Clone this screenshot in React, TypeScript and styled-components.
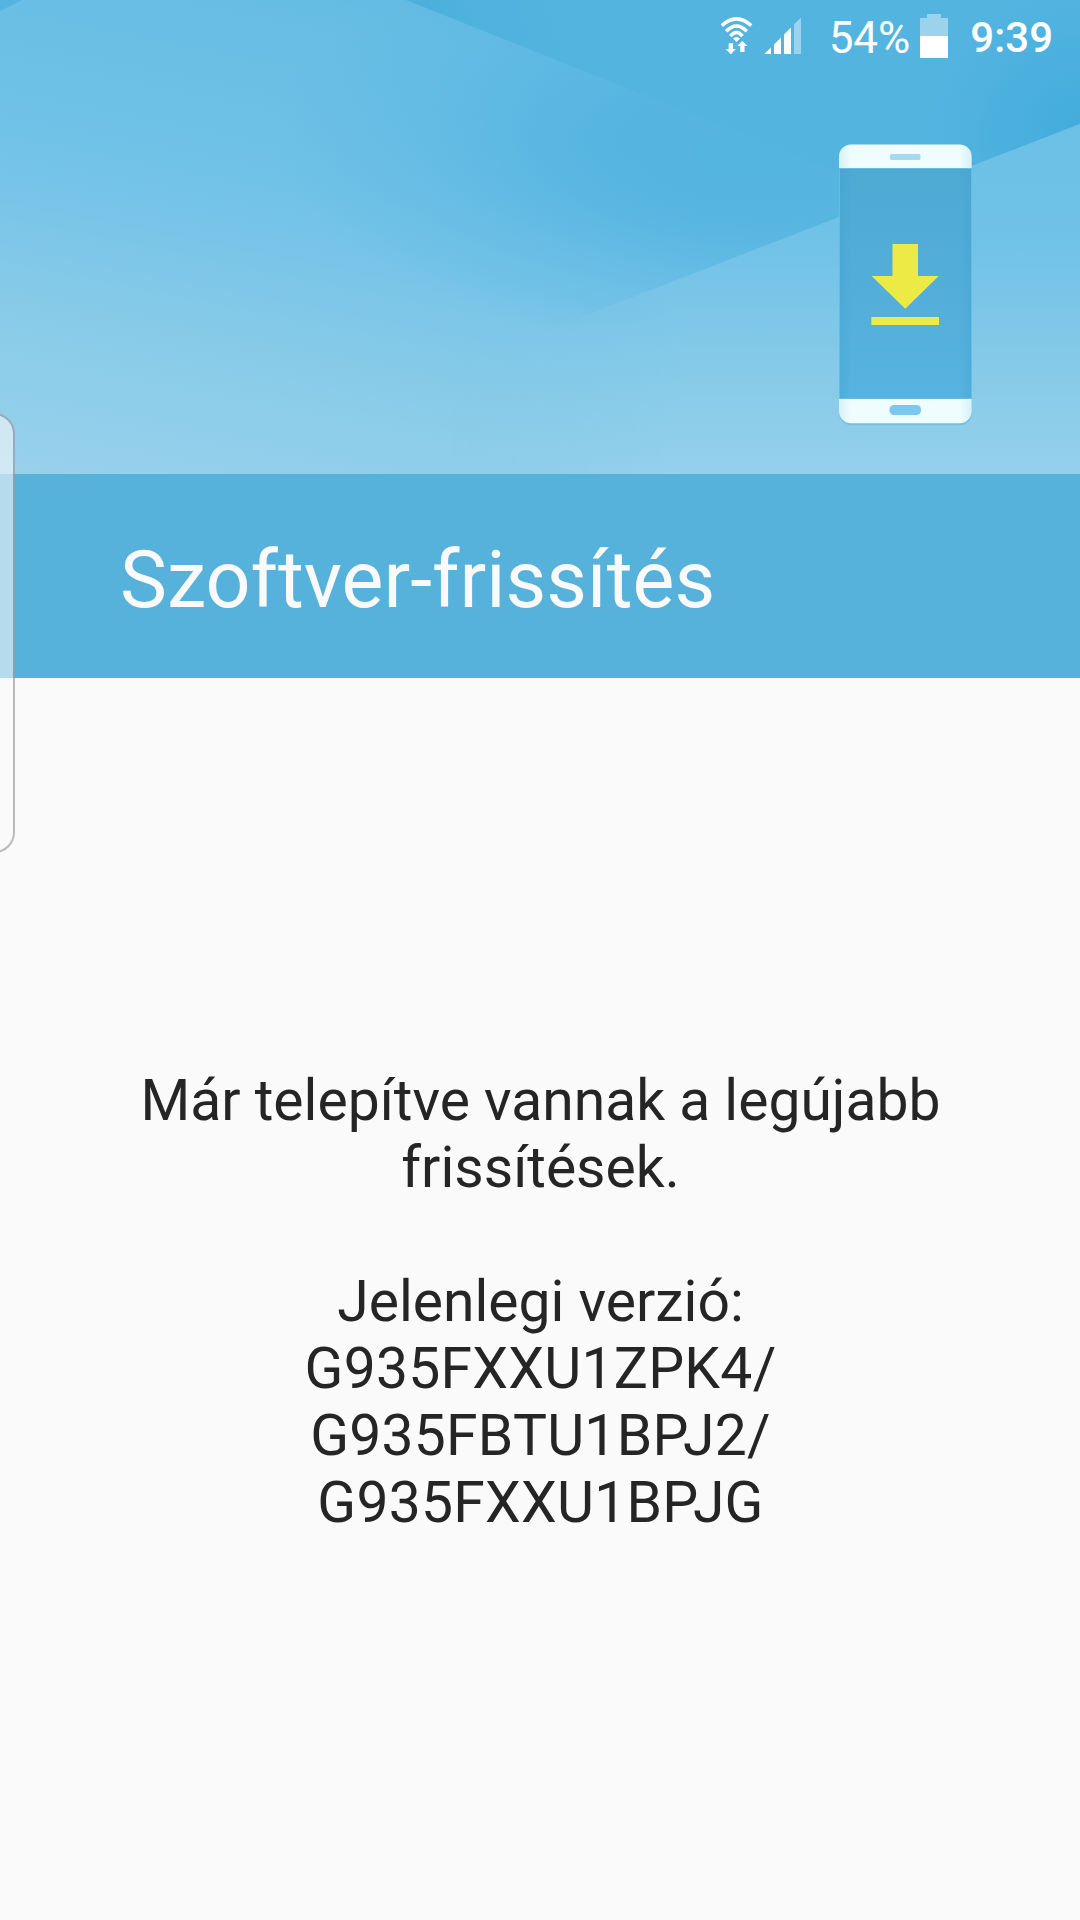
import React from "react";
import styled, { createGlobalStyle } from "styled-components";

const GlobalStyle = createGlobalStyle`
  * { box-sizing: border-box; }
  body { margin: 0; background: #fafafa; }
`;

const Screen = styled.div`
  position: relative;
  display: flex;
  flex-direction: column;
  width: 1080px;
  height: 1920px;
  overflow: hidden;
  background: #fafafa;
  font-family: Roboto, "Liberation Sans", sans-serif;
`;

const Hero = styled.header`
  position: relative;
  display: flex;
  flex-direction: column;
  height: 474px;
  flex: none;
`;

const Backdrop = styled.svg`
  position: absolute;
  inset: 0;
`;

const StatusBar = styled.div`
  position: relative;
  display: flex;
  justify-content: flex-end;
  height: 72px;
  padding-right: 27px;
  color: #fff;
`;

const StatusIcon = styled.svg<{ $gap: number }>`
  flex: none;
  margin-right: ${(p) => p.$gap}px;
`;

const StatusText = styled.span<{ $size: number; $weight: number; $gap: number }>`
  font-size: ${(p) => p.$size}px;
  font-weight: ${(p) => p.$weight};
  line-height: 50px;
  padding-top: 13px;
  margin-right: ${(p) => p.$gap}px;
  white-space: nowrap;
`;

const PhoneRow = styled.div`
  position: relative;
  display: flex;
  justify-content: flex-end;
  padding: 68px 104px 0 0;
`;

const TitleBar = styled.div`
  display: flex;
  align-items: center;
  height: 204px;
  flex: none;
  padding: 8px 0 0 120px;
  background: #57b2db;
`;

const Title = styled.h1`
  margin: 0;
  font-size: 79px;
  font-weight: 400;
  line-height: 94px;
  color: #fafafa;
  white-space: nowrap;
`;

const Content = styled.main`
  display: flex;
  flex-direction: column;
  align-items: center;
  gap: 67px;
  padding: 389px 0 0 1px;
`;

const Message = styled.p`
  margin: 0;
  font-size: 57px;
  line-height: 67px;
  text-align: center;
  color: #252525;
  white-space: pre-line;
`;

const VersionCode = styled.span`
  letter-spacing: 0.25px;
`;

const EdgeHandle = styled.div`
  position: absolute;
  left: -26px;
  top: 413px;
  width: 41px;
  height: 440px;
  border: 2px solid rgba(0, 0, 0, 0.26);
  border-radius: 21px;
  background: rgba(250, 250, 250, 0.58);
`;

function HeroBackdrop() {
  return (
    <Backdrop width="1080" height="474" viewBox="0 0 1080 474">
      <defs>
        <linearGradient id="base" gradientUnits="userSpaceOnUse" x1="280" y1="-50" x2="170" y2="500">
          <stop offset="0" stopColor="#5eb9e2" />
          <stop offset="0.09" stopColor="#66bde4" />
          <stop offset="0.37" stopColor="#6fc1e7" />
          <stop offset="0.51" stopColor="#77c4e8" />
          <stop offset="0.67" stopColor="#84c9e8" />
          <stop offset="0.79" stopColor="#8ccde9" />
          <stop offset="0.92" stopColor="#92cfeb" />
          <stop offset="1" stopColor="#97d1ec" />
        </linearGradient>
        <radialGradient
          id="depth"
          gradientUnits="userSpaceOnUse"
          cx="0"
          cy="0"
          r="1"
          gradientTransform="translate(750 155) rotate(4) scale(480 205)"
        >
          <stop offset="0" stopColor="#54b4e0" />
          <stop offset="0.35" stopColor="#54b4e0" stopOpacity="0.85" />
          <stop offset="0.5" stopColor="#54b4e0" stopOpacity="0.6" />
          <stop offset="0.7" stopColor="#54b4e0" stopOpacity="0.3" />
          <stop offset="1" stopColor="#54b4e0" stopOpacity="0" />
        </radialGradient>
        <linearGradient id="top" gradientUnits="userSpaceOnUse" x1="430" y1="20" x2="560" y2="-20">
          <stop offset="0" stopColor="#4db0dc" />
          <stop offset="1" stopColor="#54b4e0" />
        </linearGradient>
        <radialGradient id="corner" gradientUnits="userSpaceOnUse" cx="1080" cy="134" r="150">
          <stop offset="0" stopColor="#42acdc" />
          <stop offset="1" stopColor="#42acdc" stopOpacity="0" />
        </radialGradient>
        <linearGradient id="right" gradientUnits="userSpaceOnUse" x1="0" y1="124" x2="0" y2="474">
          <stop offset="0" stopColor="#6cc0e6" />
          <stop offset="0.28" stopColor="#6fc1e7" />
          <stop offset="0.43" stopColor="#76c4e8" />
          <stop offset="0.65" stopColor="#83c9e8" />
          <stop offset="1" stopColor="#94d0ec" />
        </linearGradient>
        <linearGradient id="rightFade" gradientUnits="userSpaceOnUse" x1="450" y1="0" x2="680" y2="0">
          <stop offset="0" stopColor="#fff" stopOpacity="0" />
          <stop offset="1" stopColor="#fff" />
        </linearGradient>
        <mask id="rightMask">
          <rect width="1080" height="474" fill="url(#rightFade)" />
        </mask>
      </defs>
      <rect width="1080" height="474" fill="url(#base)" />
      <rect width="1080" height="474" fill="url(#depth)" />
      <path d="M406 0L839 173L850 213L1080 124V0Z" fill="url(#top)" />
      <path d="M406 0L839 173L850 213L1080 124V0Z" fill="url(#corner)" />
      <path d="M1080 124L839 217L400 387V474H1080Z" fill="url(#right)" mask="url(#rightMask)" />
      <path d="M0 0H22L0 11Z" fill="#54b3e1" />
    </Backdrop>
  );
}

function WifiIcon() {
  return (
    <StatusIcon $gap={10} width="34" height="72" viewBox="720 0 34 72">
      <g fill="none" stroke="#fff" strokeWidth="3.5">
        <path d="M721.8 25.6Q736.5 12.2 751.2 25.6" />
        <path d="M726.2 31.2Q736.5 20.6 746.8 31.2" />
        <path d="M730.4 36.2Q736.5 28.6 742.6 36.2" />
      </g>
      <path d="M733 38.6Q736.5 35.6 740 38.6L736.5 42Z" fill="#fff" />
      <path d="M728.7 43.3H733V49H735.9L730.9 54.2L725.7 49H728.7Z" fill="#fff" />
      <path d="M742.4 41L747.4 46H744.5V52H740.2V46H737.2Z" fill="#fff" />
    </StatusIcon>
  );
}

function SignalIcon() {
  return (
    <StatusIcon $gap={27} width="38" height="72" viewBox="764 0 38 72">
      <path d="M764.3 54L771 47.4V54ZM774 54V44.4L781 37.4V54ZM784 54V34.6L791 27.6V54Z" fill="#fff" />
      <path d="M794 54V24.6L801 17.6V54Z" fill="#fff" fillOpacity="0.42" />
    </StatusIcon>
  );
}

function BatteryIcon() {
  return (
    <StatusIcon $gap={22} width="28" height="72" viewBox="920 0 28 72">
      <path d="M920 18H927V14H941V18H948V36H920Z" fill="#fff" fillOpacity="0.42" />
      <rect x="920" y="36" width="28" height="22" fill="#fff" />
    </StatusIcon>
  );
}

function PhoneIllustration() {
  return (
    <svg width="141" height="292" viewBox="835 140 141 292">
      <defs>
        <linearGradient id="glass" x1="0" y1="0" x2="0" y2="1">
          <stop offset="0" stopColor="#4ea9d3" />
          <stop offset="1" stopColor="#57b3df" />
        </linearGradient>
        <linearGradient id="shell" x1="0" y1="0" x2="1" y2="0">
          <stop offset="0" stopColor="#d6f0f8" />
          <stop offset="0.09" stopColor="#effdff" />
          <stop offset="0.91" stopColor="#effdff" />
          <stop offset="1" stopColor="#d6f0f8" />
        </linearGradient>
        <linearGradient id="curve" x1="0" y1="0" x2="1" y2="0">
          <stop offset="0" stopColor="#3b9fcc" stopOpacity="0.3" />
          <stop offset="0.09" stopColor="#3b9fcc" stopOpacity="0" />
          <stop offset="0.91" stopColor="#3b9fcc" stopOpacity="0" />
          <stop offset="1" stopColor="#3b9fcc" stopOpacity="0.3" />
        </linearGradient>
      </defs>
      <rect x="839" y="146" width="133" height="279" rx="12" fill="#5fb3d9" fillOpacity="0.55" />
      <rect x="839" y="144.5" width="132.7" height="278.7" rx="12" fill="url(#shell)" />
      <rect x="839" y="168" width="133" height="231" fill="#66bde3" />
      <rect x="840" y="169" width="131" height="229" fill="url(#glass)" />
      <rect x="840" y="169" width="131" height="229" fill="url(#curve)" />
      <rect x="890" y="154" width="30.5" height="6" rx="1.5" fill="#a8daef" />
      <rect x="889.5" y="405" width="31.5" height="10" rx="4.5" fill="#79c9ef" />
      <path d="M892.5 244H918V276H938.7L905.3 308.7L871.6 276H892.5ZM871.3 317H939V325H871.3Z" fill="#eceb46" />
    </svg>
  );
}

export default function App() {
  return (
    <Screen>
      <GlobalStyle />
      <Hero>
        <HeroBackdrop />
        <StatusBar>
          <WifiIcon />
          <SignalIcon />
          <StatusText $size={44} $weight={400} $gap={10}>54%</StatusText>
          <BatteryIcon />
          <StatusText $size={42} $weight={500} $gap={0}>9:39</StatusText>
        </StatusBar>
        <PhoneRow>
          <PhoneIllustration />
        </PhoneRow>
      </Hero>
      <TitleBar>
        <Title>Szoftver-frissítés</Title>
      </TitleBar>
      <Content>
        <Message>{"Már telepítve vannak a legújabb\nfrissítések."}</Message>
        <Message>
          {"Jelenlegi verzió:\n"}
          <VersionCode>{"G935FXXU1ZPK4/\nG935FBTU1BPJ2/\nG935FXXU1BPJG"}</VersionCode>
        </Message>
      </Content>
      <EdgeHandle />
    </Screen>
  );
}
